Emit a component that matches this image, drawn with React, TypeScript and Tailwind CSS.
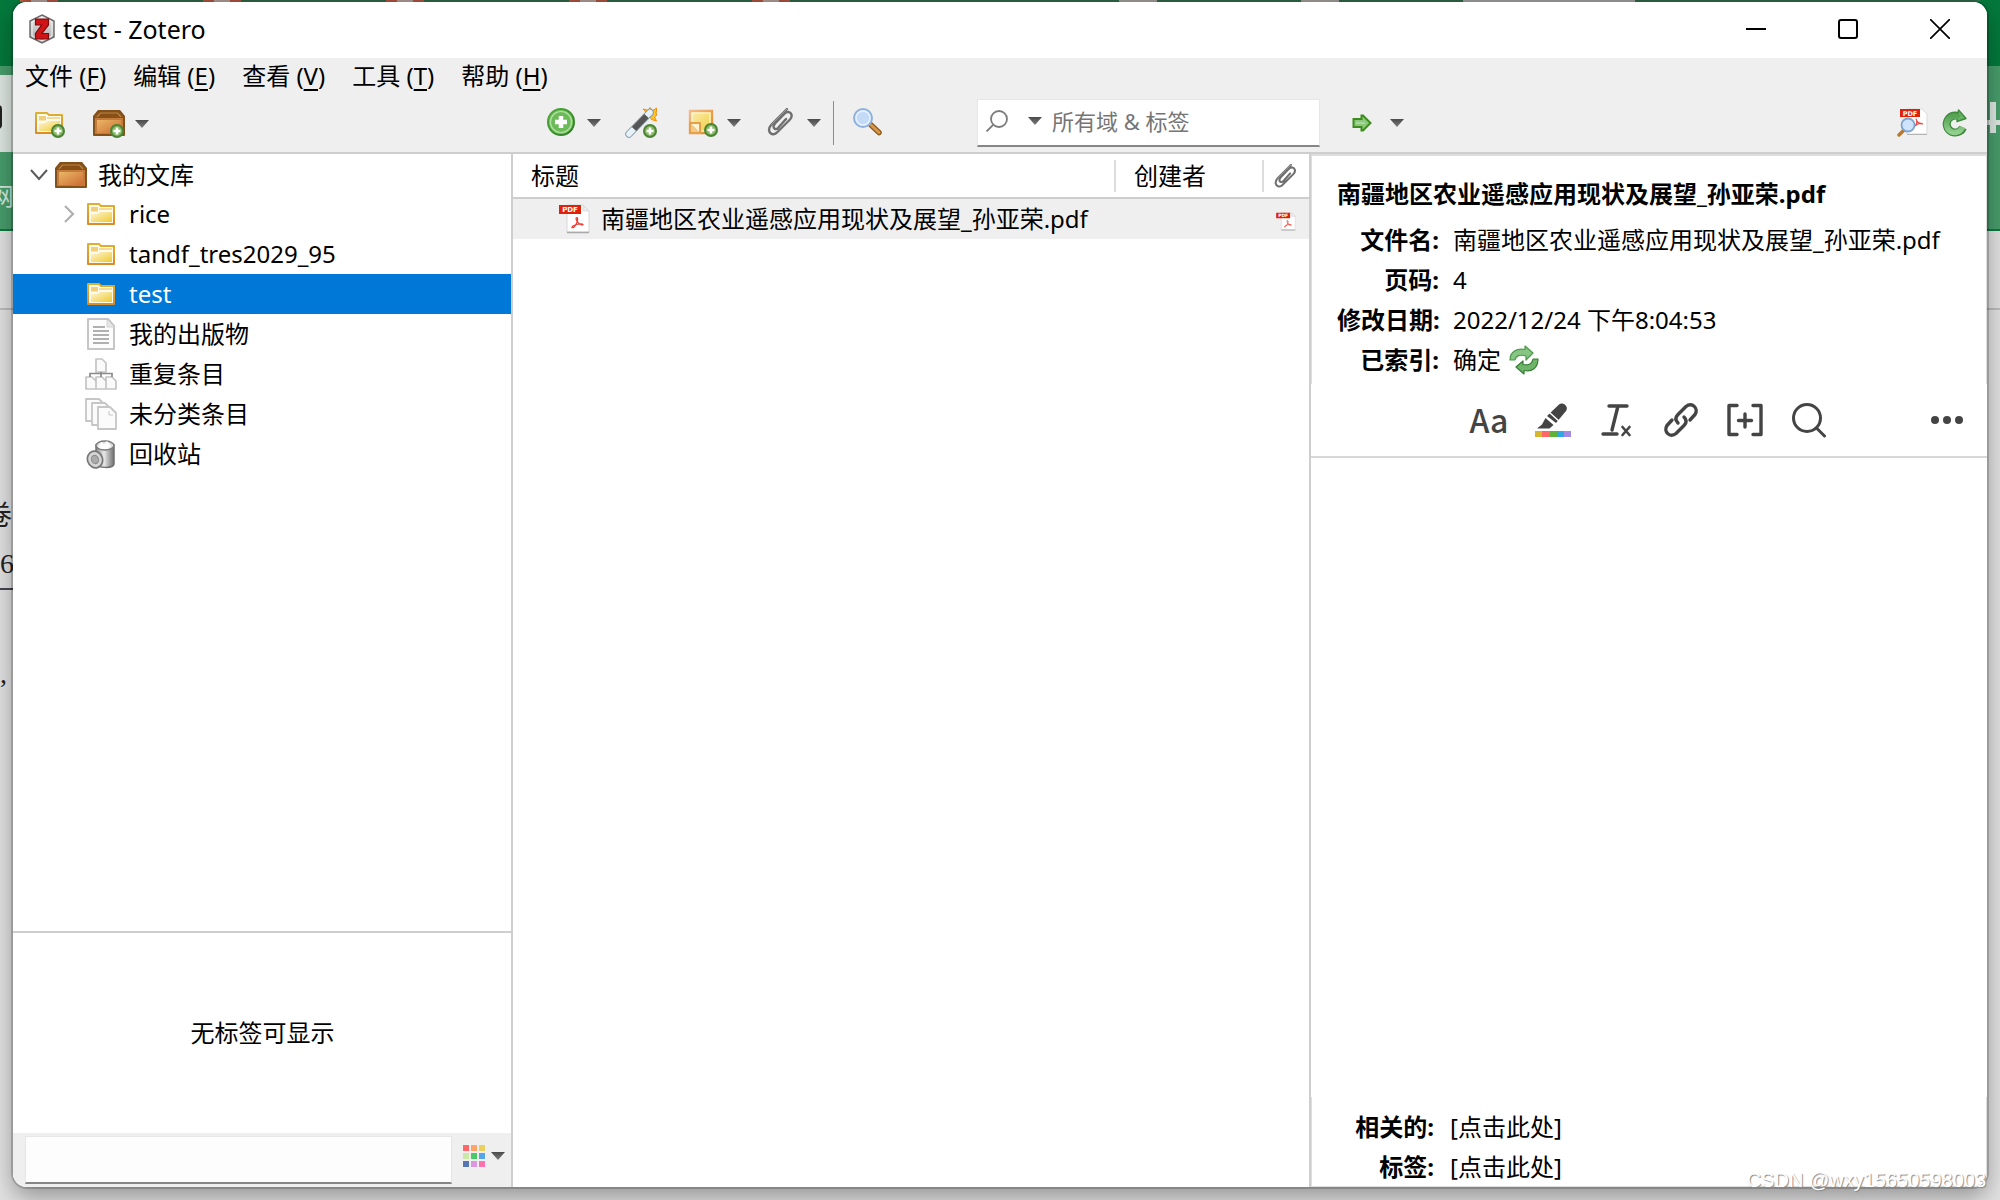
import React from "react";

const FILE = "南疆地区农业遥感应用现状及展望_孙亚荣.pdf";

/* ---------- shared drawings ---------- */

function Defs() {
  return (
    <svg className="absolute h-0 w-0" aria-hidden="true">
      <defs>
        <linearGradient id="gFolder" x1="0" y1="0" x2="1" y2="1">
          <stop offset="0" stopColor="#fdf6d8" />
          <stop offset="1" stopColor="#efc930" />
        </linearGradient>
        <linearGradient id="gFolderEdge" x1="0" y1="0" x2="0" y2="1">
          <stop offset="0" stopColor="#dcb032" />
          <stop offset="1" stopColor="#dc8c26" />
        </linearGradient>
        <linearGradient id="gBox" x1="0" y1="0" x2="1" y2="1">
          <stop offset="0" stopColor="#eab765" />
          <stop offset="1" stopColor="#cc6c33" />
        </linearGradient>
        <linearGradient id="gCaret" x1="0" y1="0" x2="0" y2="1">
          <stop offset="0" stopColor="#4a4a4a" />
          <stop offset="1" stopColor="#7c7c7c" />
        </linearGradient>
        <linearGradient id="gPlus" x1="0" y1="0" x2="1" y2="1">
          <stop offset="0" stopColor="#4fae3a" />
          <stop offset="1" stopColor="#2c7a24" />
        </linearGradient>
        <linearGradient id="gNote" x1="0" y1="0" x2="1" y2="1">
          <stop offset="0" stopColor="#fbeeb4" />
          <stop offset="1" stopColor="#f0cc3c" />
        </linearGradient>
        <linearGradient id="gNoteEdge" x1="0" y1="0" x2="1" y2="1">
          <stop offset="0" stopColor="#f6b98a" />
          <stop offset="1" stopColor="#e08a1e" />
        </linearGradient>
        <linearGradient id="gGreen" x1="0" y1="0" x2="0" y2="1">
          <stop offset="0" stopColor="#56a353" />
          <stop offset="1" stopColor="#8fd08c" />
        </linearGradient>
        <linearGradient id="gHex" x1="0" y1="0" x2="0" y2="1">
          <stop offset="0" stopColor="#e9e9e9" />
          <stop offset="1" stopColor="#a6a6a6" />
        </linearGradient>
        <linearGradient id="gCan" x1="0" y1="0" x2="1" y2="0">
          <stop offset="0" stopColor="#8c8c8c" />
          <stop offset="0.45" stopColor="#e8e8e8" />
          <stop offset="1" stopColor="#6e6e6e" />
        </linearGradient>
      </defs>
    </svg>
  );
}

const Badge = () => (
  <g>
    <circle cx="24" cy="23" r="6" fill="#86b765" stroke="#4b8334" strokeWidth="2" />
    <path d="M24 19.5v7M20.5 23h7" stroke="#fff" strokeWidth="2.6" />
  </g>
);

const FolderShape = () => (
  <g>
    <path d="M2 5h11l2 2h13v18H2z" fill="#fffbea" stroke="url(#gFolderEdge)" strokeWidth="2" strokeLinejoin="round" />
    <path d="M5 8h7v4.5H5z" fill="#efcf7c" />
    <path d="M13 9h13v2H13z" fill="#f3dc98" />
    <path d="M5 15h6l3-2h12v10H5z" fill="url(#gFolder)" />
  </g>
);

const BoxShape = () => (
  <g>
    <path d="M5.500 3h21L31 8.500V27H1V8.500z" fill="#b7712f" stroke="#83501a" strokeWidth="2" strokeLinejoin="round" />
    <path d="M6 4h20l4 5v1H2V9z" fill="#875116" />
    <path d="M4 9l3.500-4h17L28 9" fill="none" stroke="#b98449" strokeWidth="1.200" />
    <path d="M2 10h28v16H2z" fill="#c37b3d" />
    <path d="M4 12h24v13H4z" fill="url(#gBox)" />
  </g>
);

const Folder = () => (
  <svg className="h-[22px] w-[28px]" viewBox="1 4 28 22"><FolderShape /></svg>
);
const Library = () => (
  <svg className="h-[26px] w-[32px]" viewBox="0 2 32 26"><BoxShape /></svg>
);

const Caret = () => (
  <svg className="h-[8px] w-[14px]" viewBox="0 0 14 8"><path d="M0 0h14L7 8z" fill="url(#gCaret)" /></svg>
);

const Icon = ({ children }: { children: React.ReactNode }) => (
  <svg className="h-8 w-8 shrink-0" viewBox="0 0 32 32" fill="none">{children}</svg>
);

const PdfShape = () => (
  <g>
    <path d="M8 1h16l6 6v21H8z" fill="#fff" stroke="#d6d6d6" />
    <path d="M8 28.500h22" stroke="#a9a9a9" strokeWidth="1.500" />
    <path d="M24 1v6h6z" fill="#ececec" stroke="#d0d0d0" strokeWidth=".6" />
    <path d="M18 13.500c1.600 1.800.6 3.500-.6 6s-2.600 4.400-4 4.200 1-2.400 4.200-3.200 6-.8 6.400 0-3 .6-5.200-2.200-2.200-4.800-.8-4.800z" stroke="#ee3b32" strokeWidth="1.200" fill="none" />
    <path d="M0 1h22v9H0z" fill="#e0220a" />
    <text x="11" y="8" textAnchor="middle" fontSize="7" fontWeight="700" fontFamily="DejaVu Sans" fill="#fff">PDF</text>
  </g>
);

const Clip = ({ className }: { className: string }) => (
  <svg className={className} viewBox="0 0 26 28" fill="none" strokeLinecap="round">
    <path d="M20 1 4.500 16.500c-4 4.500-2.500 8.500.5 9.500 2 .6 4-.3 5.500-2L23 11.500c3-3.500 1.500-7-1.500-7.500-1.500-.2-3 .5-4 1.700L8 15.500c-2 2.500-1.800 4.500-.3 5.300 1.300.6 2.500 0 3.500-1L19 11" stroke="#6f6f6f" strokeWidth="2.400" />
    <path d="M20 1 4.500 16.500" stroke="#9a9a9a" strokeWidth="1" />
  </svg>
);

/* ---------- title bar ---------- */

function TitleBar() {
  return (
    <header className="flex h-[56px] shrink-0 items-center bg-white pr-px pb-[2px] pl-4">
      <svg className="h-[30px] w-[26px]" viewBox="0 0 26 30">
        <path d="M13 1 25 7v16L13 29 1 23V7z" fill="url(#gHex)" stroke="#6c6c6c" strokeWidth="1.500" />
        <path d="M13 3 23 8v14l-10 5L3 22V8z" fill="none" stroke="#f4f4f4" strokeWidth="1" />
        <path d="M6.500 5h13v6L13 19.500h6.500V25h-13v-5.500l6-8.500h-6z" fill="#d11216" stroke="#7a0c0f" strokeWidth="1.200" />
      </svg>
      <h1 className="ml-2 flex-1 text-[25px] leading-8">test - Zotero</h1>
      <div className="flex h-full">
        <button aria-label="最小化" className="flex w-[92px] items-center justify-center">
          <svg className="h-5 w-5" viewBox="0 0 20 20"><path d="M0 10h20" stroke="#000" strokeWidth="2" /></svg>
        </button>
        <button aria-label="最大化" className="flex w-[92px] items-center justify-center">
          <svg className="h-5 w-5" viewBox="0 0 20 20"><rect x="1" y="1" width="18" height="18" rx="2" fill="none" stroke="#000" strokeWidth="2" /></svg>
        </button>
        <button aria-label="关闭" className="flex w-[92px] items-center justify-center">
          <svg className="h-5 w-5" viewBox="0 0 20 20"><path d="M0 0l20 20M20 0 0 20" stroke="#000" strokeWidth="1.700" /></svg>
        </button>
      </div>
    </header>
  );
}

const MENUS = [["文件", "F"], ["编辑", "E"], ["查看", "V"], ["工具", "T"], ["帮助", "H"]];

function MenuBar() {
  return (
    <nav className="flex h-[38px] shrink-0 items-center gap-[27px] bg-[#efefef] pb-[2px] pl-3">
      {MENUS.map(([name, key]) => (
        <button key={key} className="text-[24px] leading-8">
          {name} (<span className="underline decoration-2 underline-offset-4">{key}</span>)
        </button>
      ))}
    </nav>
  );
}

/* ---------- toolbar ---------- */

function Toolbar() {
  return (
    <div className="flex h-[58px] shrink-0 items-center border-b-2 border-[#cecece] bg-[#efefef]">
      <div className="flex w-[500px] shrink-0 items-center pl-[21px]">
        <button aria-label="新建分类">
          <Icon><FolderShape /><Badge /></Icon>
        </button>
        <button aria-label="新建文库" className="ml-[27px] flex items-center gap-[10px]">
          <Icon><BoxShape /><Badge /></Icon>
          <Caret />
        </button>
      </div>
      <div className="flex min-w-0 flex-1 items-center pb-[2px] pl-8">
        <button aria-label="新建条目" className="flex items-center gap-[10px]">
          <Icon>
            <circle cx="16" cy="15" r="13" fill="#7cc465" stroke="url(#gPlus)" strokeWidth="2" />
            <circle cx="16" cy="15" r="10.500" fill="#6cbb59" stroke="#b5e0a6" strokeWidth="1.200" />
            <path d="M16 9v12M10 15h12" stroke="#fff" strokeWidth="4.500" />
          </Icon>
          <Caret />
        </button>
        <button aria-label="通过标识符添加条目" className="ml-6">
          <Icon>
            <path d="M24 8l-6-6 6 1.500 1-3 2.500 3L32 1l-1 5 1 2-2.500 2 2 4-5-1.500z" fill="#ffc321" stroke="#f08c10" strokeWidth="1" />
            <path d="M4 27 25 5.500" stroke="#7f9bb0" strokeWidth="7.500" strokeLinecap="round" />
            <path d="M4 27 25 5.500" stroke="#e8f1f6" strokeWidth="5.500" strokeLinecap="round" />
            <path d="M9 22 21.500 9" stroke="#555" strokeWidth="6" />
            <circle cx="25" cy="24" r="6" fill="#86b765" stroke="#4b8334" strokeWidth="2" />
            <path d="M25 20.500v7M21.500 24h7" stroke="#fff" strokeWidth="2.600" />
          </Icon>
        </button>
        <button aria-label="新建笔记" className="ml-[30px] flex items-center gap-2">
          <Icon>
            <path d="M3 4h22v22H3z" fill="url(#gNote)" stroke="url(#gNoteEdge)" strokeWidth="2.400" />
            <path d="M5 6h18v18H5z" stroke="#fff8dc" strokeWidth="1.200" />
            <path d="M2 15h12v12H2z" fill="#e7a04a" />
            <path d="M4 17l8 8V17z" fill="#fff4d0" />
            <path d="M4 17v8h8z" fill="#f3c983" />
            <Badge />
          </Icon>
          <Caret />
        </button>
        <button aria-label="添加附件" className="ml-[26px] flex items-center gap-[14px]">
          <Clip className="mb-[3px] h-[28px] w-[26px]" />
          <Caret />
        </button>
        <span className="ml-3 h-11 w-px bg-[#8c8c8c]" />
        <button aria-label="高级搜索" className="ml-[17px]">
          <Icon>
            <path d="M20 18l8 7.500" stroke="#8a5a1c" strokeWidth="5.500" strokeLinecap="round" />
            <path d="M20 18l8 7.500" stroke="#d8964a" strokeWidth="3" strokeLinecap="round" />
            <circle cx="12" cy="11" r="9" fill="#c3dbf6" stroke="#8fb2dd" strokeWidth="2" />
            <circle cx="12" cy="11" r="7" stroke="#e8f2fd" strokeWidth="1.500" />
          </Icon>
        </button>
        <div className="ml-auto flex h-12 w-[343px] shrink-0 items-center border border-b-2 border-[#e6e6e6] border-b-[#868686] bg-white pb-1 pl-2">
          <button aria-label="搜索范围" className="flex items-center gap-5">
            <svg className="h-[22px] w-[22px]" viewBox="0 0 22 22" fill="none" stroke="#7d7d7d" strokeWidth="1.800">
              <circle cx="13" cy="9" r="8" /><path d="M7 15l-6.500 6.500" />
            </svg>
            <Caret />
          </button>
          <input aria-label="搜索" placeholder="所有域 &amp; 标签" className="ml-[10px] min-w-0 flex-1 bg-transparent text-[22px] leading-8 outline-none placeholder:text-[#757575]" />
        </div>
      </div>
      <div className="flex w-[667px] shrink-0 items-center pb-[2px] pl-6">
        <button aria-label="定位" className="ml-2 flex items-center gap-[18px]">
          <svg className="h-[18px] w-[20px]" viewBox="0 0 20 18">
            <path d="M1.500 5h8V1.500h1.500L18.500 9 11 16.500H9.500V13h-8z" fill="#8cc97c" stroke="#3c8d1c" strokeWidth="2" />
            <path d="M4 9h9" stroke="#b4dea8" strokeWidth="1.500" />
          </svg>
          <Caret />
        </button>
        <button aria-label="查找 PDF" className="ml-auto">
          <Icon>
            <path d="M10 2h15l5 5v20H10z" fill="#fff" stroke="#dadada" />
            <path d="M10 27.500h20" stroke="#b3b3b3" strokeWidth="1.200" />
            <path d="M19 12c2 2 0 6-1 7 3-3 6-3 8-2-3 0-6-2-7-5z" stroke="#e94444" strokeWidth="1.200" />
            <path d="M3 2h20v8H3z" fill="#e0220a" />
            <text x="13" y="8.500" textAnchor="middle" fontSize="6.500" fontWeight="700" fontFamily="DejaVu Sans" fill="#fff">PDF</text>
            <path d="M7 23l-5 5" stroke="#b77a2e" strokeWidth="3.500" strokeLinecap="round" />
            <circle cx="11" cy="18" r="6.500" fill="#cfe4fb" stroke="#7fa3cf" strokeWidth="1.800" />
          </Icon>
        </button>
        <button aria-label="同步" className="mr-[17px] ml-[9px]">
          <Icon>
            <path d="M22 10A8.500 8.500 0 1 0 25 20.500" stroke="#3f8a3d" strokeWidth="8" />
            <path d="M20.500 3l7.500 8.500-9 3z" fill="#6bb568" stroke="#3f8a3d" strokeWidth="1.500" strokeLinejoin="round" />
            <path d="M21.500 10.500A8.200 8.200 0 1 0 24.500 20" stroke="url(#gGreen)" strokeWidth="5.500" />
          </Icon>
        </button>
      </div>
    </div>
  );
}

/* ---------- collections ---------- */

const Publications = () => (
  <svg className="h-8 w-7" viewBox="0 0 28 32" fill="none">
    <path d="M1 1h20l6 7v23H1z" fill="#fcfcfc" stroke="#c6c6c6" strokeWidth="2" strokeLinejoin="round" />
    <path d="M20 2v7h7" fill="#e6e6e6" stroke="#d2d2d2" />
    <path d="M6 9h12M6 13h16M6 17h16M6 21h16M6 25h16" stroke="#b0b0b0" strokeWidth="2" />
  </svg>
);
const Duplicates = () => (
  <svg className="h-8 w-8" viewBox="0 0 32 32" fill="none">
    <g fill="#fafafa" stroke="#c4c4c4" strokeWidth="1.700" strokeLinejoin="round">
      <path d="M11 1h6l4 4v9H11z" />
      <path d="M1 19h6l4 4v8H1zM11 19h6l4 4v8H11zM21 19h6l4 4v8H21z" />
    </g>
    <path d="M5 19v-3.500h22V19M16 14v5" stroke="#8b8b8b" strokeWidth="1.700" />
  </svg>
);
const Unfiled = () => (
  <svg className="h-8 w-8" viewBox="0 0 32 32" fill="#fbfbfb" stroke="#c6c6c6" strokeWidth="1.800" strokeLinejoin="round">
    <path d="M1 1h13l5 5v17H1z" />
    <path d="M7 5h13l5 5v17H7z" />
    <path d="M13 9h12l6 6v16H13z" />
    <path d="M24 13v4h4" fill="none" strokeWidth="1" />
  </svg>
);
const Trash = () => (
  <svg className="h-[29px] w-[30px]" viewBox="0 0 30 29" fill="none">
    <path d="M10 5v19c2 4 17 5 18 0V5z" fill="url(#gCan)" stroke="#707070" strokeWidth="1.500" />
    <ellipse cx="19" cy="5.500" rx="9" ry="4.500" fill="#dcdcdc" stroke="#7c7c7c" strokeWidth="1.500" />
    <path d="M12 7l3-5 3 2 3-3 4 5-3 3h-7z" fill="#fff" />
    <ellipse cx="9" cy="19.500" rx="7.500" ry="8.500" transform="rotate(-18 9 19.500)" fill="#d5d5d5" stroke="#777" strokeWidth="1.700" />
    <ellipse cx="9" cy="19.500" rx="3.500" ry="4.200" transform="rotate(-18 9 19.500)" fill="#aaa" stroke="#8a8a8a" />
  </svg>
);

const TREE = [
  { name: "rice", icon: <Folder />, closed: true },
  { name: "tandf_tres2029_95", icon: <Folder /> },
  { name: "test", icon: <Folder />, selected: true },
  { name: "我的出版物", icon: <Publications /> },
  { name: "重复条目", icon: <Duplicates /> },
  { name: "未分类条目", icon: <Unfiled /> },
  { name: "回收站", icon: <Trash /> },
];

const SWATCHES = [
  "bg-[#ff6666]", "bg-[#ffa366]", "bg-[#ecd05c]",
  "bg-[#cbe9a6]", "bg-[#4ac968]", "bg-[#55a6ea]",
  "bg-[#5676b4]", "bg-[#dc97e0]", "bg-[#ff70ae]",
];

function Sidebar() {
  return (
    <aside className="flex w-[500px] shrink-0 flex-col border-r-2 border-[#cecece] bg-white">
      <ul className="flex-1 text-[24px] leading-8">
        <li>
          <button className="flex h-10 w-full items-center pt-px pl-[17px] text-left">
            <svg className="h-[12px] w-[18px]" viewBox="0 0 18 12" fill="none"><path d="M1 1l8 9 8-9" stroke="#5a5a5a" strokeWidth="2" /></svg>
            <span className="ml-[7px] w-[43px]"><Library /></span>
            我的文库
          </button>
          <ul>
            {TREE.map((n) => (
              <li key={n.name}>
                <button className={n.selected ? "flex h-10 w-full items-center bg-[#0078d7] pl-[51px] text-left text-white" : "flex h-10 w-full items-center pl-[51px] text-left"}>
                  <span className="w-5">
                    {n.closed && (
                      <svg className="h-[18px] w-[11px]" viewBox="0 0 11 18" fill="none"><path d="M1 1l8 8-8 8" stroke="#b0b0b0" strokeWidth="2.200" /></svg>
                    )}
                  </span>
                  <span className="mr-[11px] flex w-[34px] justify-center">{n.icon}</span>
                  {n.name}
                </button>
              </li>
            ))}
          </ul>
        </li>
      </ul>
      <section className="flex h-[256px] shrink-0 flex-col border-t-2 border-[#cecece]">
        <p className="flex flex-1 items-center justify-center pl-px text-[24px] leading-8">无标签可显示</p>
        <div className="flex h-[54px] items-center bg-[#efefef] pl-3">
          <input aria-label="筛选标签" className="h-12 min-w-0 flex-1 border border-b-2 border-[#e6e6e6] border-b-[#868686] bg-[#fdfdfd] px-2 text-[22px] outline-none" />
          <button aria-label="标签颜色" className="mr-[6px] mb-[8px] ml-[11px] flex items-center gap-[6px]">
            <span className="grid grid-cols-3 gap-[2px]">
              {SWATCHES.map((c) => <i key={c} className={`${c} h-[6px] w-[6px]`} />)}
            </span>
            <Caret />
          </button>
        </div>
      </section>
    </aside>
  );
}

/* ---------- items ---------- */

function Items() {
  return (
    <main className="min-w-0 flex-1 border-r-2 border-[#cecece] bg-white">
      <table className="w-full table-fixed text-left text-[24px] leading-8">
        <colgroup>
          <col />
          <col className="w-[148px]" />
          <col className="w-[47px]" />
        </colgroup>
        <thead>
          <tr className="h-[44px] border-b-2 border-[#cecece]">
            <th className="pl-[18px] font-normal">标题</th>
            <th className="font-normal"><div className="border-l-2 border-[#dcdcdc] pl-[18px]">创建者</div></th>
            <th aria-label="附件"><div className="flex h-8 items-center border-l-2 border-[#dcdcdc] pl-[9px]"><Clip className="h-[24px] w-[24px]" /></div></th>
          </tr>
        </thead>
        <tbody>
          <tr className="h-[41px] bg-[#efefef]">
            <td>
              <div className="flex items-center gap-[11px] pl-[46px]">
                <svg className="h-[30px] w-[31px] shrink-0" viewBox="0 0 31 30"><PdfShape /></svg>
                <span className="whitespace-nowrap">{FILE}</span>
              </div>
            </td>
            <td />
            <td><svg className="mt-1 ml-[14px] h-[19px] w-[20px]" viewBox="0 0 31 30"><PdfShape /></svg></td>
          </tr>
        </tbody>
      </table>
    </main>
  );
}

/* ---------- item pane ---------- */

const Tool = ({ label, children }: { label: string; children: React.ReactNode }) => (
  <button aria-label={label} className="flex w-16 justify-center">
    <svg className="h-9 w-9" viewBox="0 0 36 36" fill="none" stroke="#444" strokeWidth="3.400" strokeLinecap="round" strokeLinejoin="round">{children}</svg>
  </button>
);

const INFO = [["文件名:", FILE], ["页码:", "4"], ["修改日期:", "2022/12/24 下午8:04:53"]];

function ItemPane() {
  return (
    <aside className="flex w-[676px] shrink-0 flex-col bg-white text-[24px] leading-10">
      <section className="h-[230px] border-x border-t-2 border-[#dedede] pt-4 pl-[25px]">
        <h2 className="pb-1 leading-[44px] font-bold">{FILE}</h2>
        <dl className="grid grid-cols-[102px_1fr] gap-x-[14px] whitespace-nowrap">
          {INFO.map(([k, v]) => (
            <React.Fragment key={k}>
              <dt className="text-right font-bold">{k}</dt>
              <dd>{v}</dd>
            </React.Fragment>
          ))}
          <dt className="text-right font-bold">已索引:</dt>
          <dd className="flex items-center gap-[8px]">
            确定
            <button aria-label="重建索引">
              <svg className="h-[30px] w-[30px]" viewBox="0 0 30 30" strokeWidth="1.200" strokeLinejoin="round">
                <path d="M1 15C1 7 7 3 16 4.500V1l8 7-7 7v-4C11 9.500 7 10 6 15z" fill="#86c682" stroke="#4c9a4a" />
                <path d="M29 14c0 9-6 13-14 11.500V29l-8-7 7-6v3.500c5 1 9 0 10-5.500z" fill="#6eb56a" stroke="#377d35" />
              </svg>
            </button>
          </dd>
        </dl>
      </section>
      <div className="flex h-[74px] items-center border-b-2 border-[#d8d8d8] pr-2 pl-[146px]">
        <button aria-label="文本格式" className="w-16 pb-[2px] text-center font-['Noto_Sans_CJK_SC'] text-[32px] leading-9 font-medium text-[#444]">Aa</button>
        <Tool label="高亮">
          <path d="M12 14 24 2.500c4-3 10 2 7 6.500L21 21z" fill="#444" stroke="none" />
          <path d="M10.500 16l8 7-4 3.500H2l5-4z" fill="#444" stroke="none" />
          <path d="M15 11l10 9" stroke="#fff" strokeWidth="1.500" />
          <g stroke="none">
            <path d="M0 29h8v6H0z" fill="#d8b62b" /><path d="M7 29h8v6H7z" fill="#ff6666" /><path d="M15 29h7v6h-7z" fill="#5fb236" />
            <path d="M22 29h7v6h-7z" fill="#2ea8e5" /><path d="M29 29h7v6h-7z" fill="#a28ae5" />
          </g>
        </Tool>
        <Tool label="清除格式">
          <path d="M10 4h18M19 4l-6 24M4 32h14" />
          <path d="M23.500 25l7 8M30.500 25l-7 8" strokeWidth="2.600" />
        </Tool>
        <Tool label="插入链接">
          <path d="M15 21c-3-3-2.500-6 0-8.500L23 4.500c6-5 13 2 9 8L27 18" />
          <path d="M21 15c3 3 2.500 6 0 8.500L13 31.500c-6 5-13-2-9-8L9 18" />
        </Tool>
        <Tool label="插入引用">
          <path d="M10 3.500H2v29h8M26 3.500h8v29h-8M18 12v13M11.500 18.500h13" />
        </Tool>
        <Tool label="搜索">
          <circle cx="16" cy="16" r="13.500" strokeWidth="3" /><path d="M25.500 26l8 8" strokeWidth="3" />
        </Tool>
        <button aria-label="更多" className="ml-auto flex w-16 justify-center">
          <svg className="h-2 w-8" viewBox="0 0 32 8" fill="#444"><circle cx="4" cy="4" r="4" /><circle cx="16" cy="4" r="4" /><circle cx="28" cy="4" r="4" /></svg>
        </button>
      </div>
      <textarea aria-label="笔记" className="w-full flex-1 resize-none p-4 outline-none" />
      <section className="h-[90px] border-x border-b border-[#dedede] pt-[10px] pl-[25px]">
        <dl className="grid grid-cols-[97px_1fr] gap-x-4">
          <dt className="text-right font-bold">相关的:</dt>
          <dd><button>[点击此处]</button></dd>
          <dt className="text-right font-bold">标签:</dt>
          <dd><button>[点击此处]</button></dd>
        </dl>
      </section>
    </aside>
  );
}

/* ---------- desktop behind the window ---------- */

function Backdrop() {
  return (
    <div aria-hidden="true" className="absolute inset-0 overflow-hidden bg-[#e2e2e2]">
      <div className="h-[66px] bg-[#04793c]" />
      <div className="h-[163px] bg-[#489d6c]" />
      <div className="h-[2px] bg-[#0b7a40]" />
      <div className="h-[79px] border-b-2 border-[#bcbcbc]" />
      <div className="absolute top-0 right-5 left-5 flex h-[2px] bg-[#35774f]">
        {[0, 1, 2, 3, 4].map((i) => (
          <span key={i} className="mr-[145px] flex h-full w-[38px] justify-center bg-[#c8604a]"><i className="w-4 bg-[#c9b4ac]" /></span>
        ))}
        <span className="ml-[184px] w-[38px] bg-[#b9b4b0]" />
        <span className="ml-[144px] w-[38px] bg-[#b9b4b0]" />
        <span className="ml-[124px] w-[172px] bg-[#b4b8b5]" />
      </div>
      <div className="absolute top-[75px] left-0 h-[77px] w-5 bg-[#dfe7e2]" />
      <div className="absolute top-[105px] left-[-10px] h-[24px] w-[12px] rounded-r bg-[#222]" />
      <span className="absolute top-[184px] left-[-10px] text-[24px] leading-6 text-[#d5ebdf]">网</span>
      <div className="absolute top-[101px] right-0 flex h-8 w-[14px] flex-col items-center justify-center">
        <span className="h-[18px] w-[6px] bg-[#dfe9e3]" /><span className="h-[5px] w-[14px] bg-[#dfe9e3]" /><span className="h-[8px] w-[6px] bg-[#dfe9e3]" />
      </div>
      <div className="absolute top-[500px] left-0 w-[13px] overflow-hidden font-['Liberation_Serif','Noto_Sans_CJK_SC',serif] text-[28px] leading-8 text-[#222]">
        <span className="-ml-4 block w-8">卷</span>
        <span className="mt-4 block">6</span>
        <span className="mt-2 block h-[2px] bg-[#445]" />
        <span className="mt-[68px] block">,</span>
      </div>
    </div>
  );
}

export default function App() {
  return (
    <div className="relative h-screen overflow-hidden px-[13px] pt-[2px] pb-[13px] font-['Noto_Sans','Noto_Sans_CJK_SC',sans-serif] text-black">
      <Defs />
      <Backdrop />
      <div className="relative flex h-full flex-col overflow-hidden rounded-[14px] bg-white shadow-[0_0_0_2px_rgba(0,0,0,0.18),0_10px_24px_rgba(0,0,0,0.35)]">
        <TitleBar />
        <MenuBar />
        <Toolbar />
        <div className="flex min-h-0 flex-1">
          <Sidebar />
          <Items />
          <ItemPane />
        </div>
      </div>
      <span className="absolute right-[14px] bottom-2 font-['Liberation_Sans',sans-serif] text-[20px] leading-6 text-white [text-shadow:1px_1px_1px_#888]">CSDN @wxy15650598003</span>
    </div>
  );
}
